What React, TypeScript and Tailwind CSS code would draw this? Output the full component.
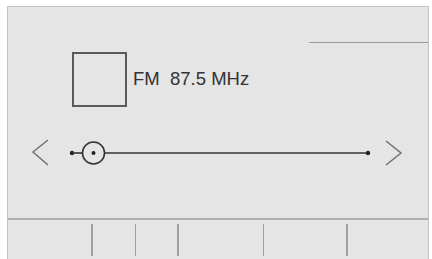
import React from "react";

export default function App() {
  const ticks = [83, 42, 41, 84, 82];
  return (
    <div className="w-[432px] h-[259px] bg-white pt-[6px] pl-[7px] pr-[3px] overflow-hidden">
      <div className="h-[253px] border-l border-t border-r border-[#c4c4c4] bg-[#e5e5e5] flex flex-col">
        <div className="mt-[35px] self-end w-[119px] h-px bg-[#9a9a9a]" />
        <div className="mt-[9px] flex items-center pl-[64px]">
          <div className="w-[55px] h-[55px] border-2 border-[#5a5a5a]" />
          <span
            className="ml-[6px] text-[18.5px] leading-none text-[#333]"
            style={{ fontFamily: '"Liberation Sans", Arial, sans-serif' }}
          >
            FM{"\u00a0\u00a0"}87.5 MHz
          </span>
        </div>
        <svg className="mt-[31px]" width="420" height="30" viewBox="0 0 420 30">
          <polyline points="40,2 25,14 40,27" fill="none" stroke="#707070" strokeWidth="1.5" />
          <polyline points="378,3 393,15 378,27" fill="none" stroke="#707070" strokeWidth="1.5" />
          <circle cx="64" cy="15" r="2.2" fill="#222" />
          <line x1="64" y1="15" x2="74" y2="15" stroke="#333" strokeWidth="1.6" />
          <circle cx="85.5" cy="15" r="11" fill="none" stroke="#333" strokeWidth="1.6" />
          <circle cx="85.5" cy="15" r="2" fill="#222" />
          <line x1="96.5" y1="15" x2="360" y2="15" stroke="#333" strokeWidth="1.6" />
          <circle cx="360" cy="15" r="2.2" fill="#222" />
        </svg>
        <div className="mt-[50px] h-[2px] bg-[#b0b0b0]" />
        <div className="flex pt-[4px]">
          {ticks.map((m, i) => (
            <div key={i} className="w-[1.5px] h-[32px] bg-[#a0a0a0]" style={{ marginLeft: m }} />
          ))}
        </div>
      </div>
    </div>
  );
}
